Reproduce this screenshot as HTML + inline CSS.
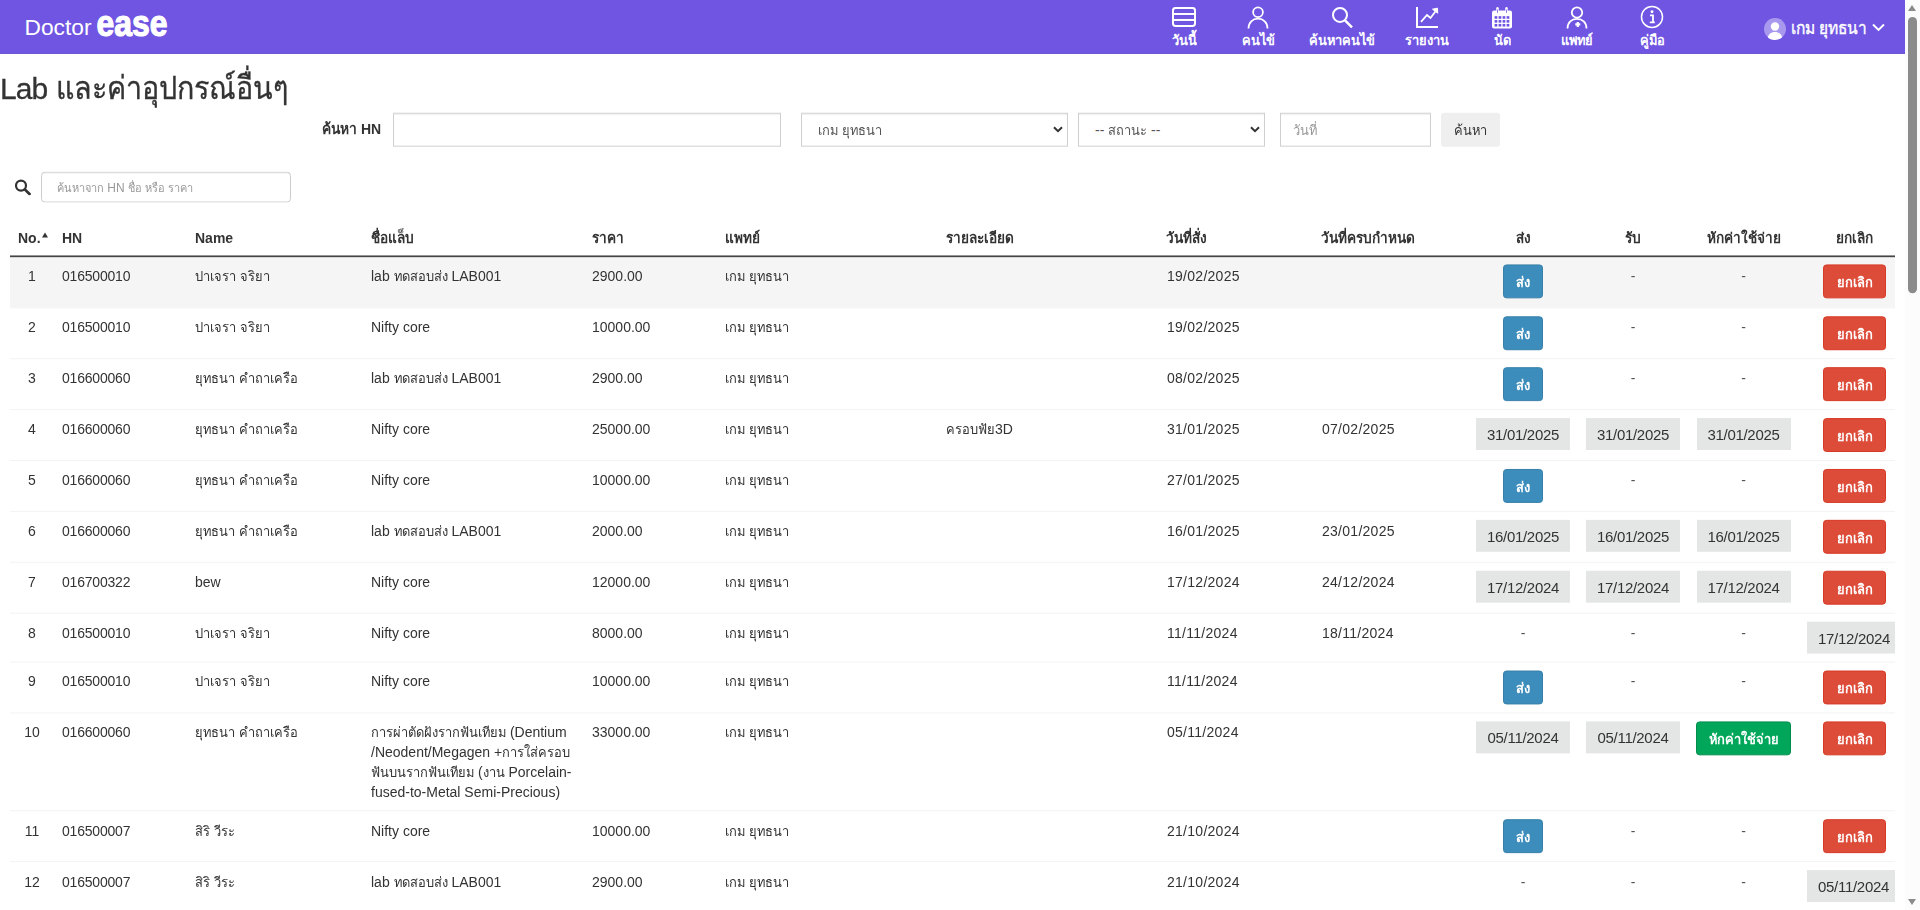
<!DOCTYPE html>
<html lang="th">
<head>
<meta charset="utf-8">
<title>Lab</title>
<style>
*{box-sizing:border-box;}
html,body{margin:0;padding:0;}
body{width:1920px;height:910px;overflow:hidden;position:relative;background:#fff;color:#333;
  font-family:"Liberation Sans",sans-serif;font-size:14px;line-height:20px;}
.t{display:inline-block;font-size:12.9px;line-height:0;transform:scaleY(1.08);transform-origin:0 .34em;white-space:nowrap;}
#nav{position:absolute;left:0;top:0;width:1905px;height:54.4px;background:#6f55e1;color:#fff;box-shadow:inset 0 -1px 0 rgba(40,30,120,.18);}
#logo{position:absolute;left:24px;top:0;}
#logo .d{position:absolute;left:0;top:15px;font-size:23px;line-height:26px;letter-spacing:-0.9px;font-weight:normal;}
#logo .e{position:absolute;left:72px;top:9px;font-size:31px;line-height:30px;font-weight:bold;letter-spacing:-1.2px;-webkit-text-stroke:1.3px #fff;}
.ni{position:absolute;top:0;height:54px;width:90px;text-align:center;color:#fff;}
.ni svg{position:absolute;left:50%;top:5px;margin-left:-14px;width:28px;height:24px;}
.ni span.l{position:absolute;left:0;right:0;top:31px;font-size:14px;line-height:18px;font-weight:bold;white-space:nowrap;}
#user{position:absolute;left:1764px;top:0;height:54px;white-space:nowrap;}
#user .av{position:absolute;left:0;top:18px;width:22px;height:22px;border-radius:50%;background:#a898ee;overflow:hidden;}
#user .nm{position:absolute;left:27px;top:17px;font-size:17px;line-height:24px;color:#fff;-webkit-text-stroke:.35px #fff;}
#user .nm .t{font-size:15.5px;}
#user svg.ch{position:absolute;left:108px;top:23px;width:13px;height:9px;}
#sb{position:absolute;left:1905px;top:0;width:15px;height:912px;background:#fcfcfc;}
#sb .th{position:absolute;left:3px;top:17px;width:9px;height:277px;border-radius:5px;background:#8b8b8b;}
#sb .up{position:absolute;left:3px;top:5px;width:0;height:0;border-left:4.5px solid transparent;border-right:4.5px solid transparent;border-bottom:6px solid #8b8b8b;}
#sb .dn{position:absolute;left:3px;top:901px;width:0;height:0;border-left:4.5px solid transparent;border-right:4.5px solid transparent;border-top:6px solid #8b8b8b;}
h1{position:absolute;left:0;top:67px;margin:0;letter-spacing:-.9px;-webkit-text-stroke:.3px #333;font-size:30px;line-height:44px;font-weight:normal;color:#333;white-space:nowrap;}
h1 .t{font-size:28.7px;margin-left:1px;letter-spacing:0;transform:scaleY(1.13);}
.lbl{position:absolute;left:322px;top:119px;font-weight:bold;line-height:20px;white-space:nowrap;}
.inp{position:absolute;height:34px;border:1px solid #d0d0d0;background:#fff;color:#555;padding:6px 16px;line-height:20px;white-space:nowrap;box-shadow:inset 0 1px 1px rgba(0,0,0,.075);}
.inp .car{position:absolute;right:4px;top:12px;width:10px;height:8px;}
.ph{color:#999;}
.lbl .t{font-size:13.8px;}
#btnS{position:absolute;left:1441px;top:112.6px;width:59px;height:34px;background:#efefef;color:#333;text-align:center;line-height:34px;border-radius:3px;}
#mag{position:absolute;left:14px;top:179px;width:17px;height:17px;}
#q{position:absolute;left:41px;top:172px;width:250px;height:31px;border:1px solid #ccc;border-radius:4px;padding:5px 15px;font-size:12px;line-height:20px;color:#999;white-space:nowrap;box-shadow:inset 0 1px 1px rgba(0,0,0,.075);}
#q .t{font-size:11px;}
#tw{position:absolute;left:10px;top:220px;width:1885px;height:691px;overflow:hidden;}
#pg{position:absolute;left:0;top:0;width:1920px;height:912px;overflow:hidden;transform:scaleY(0.997807);transform-origin:0 0;}
table{width:1900px;border-collapse:separate;border-spacing:0;table-layout:fixed;}
th{font-weight:bold;text-align:left;padding:8px 8px 7px 8px;height:38px;border-bottom:2px solid #444;white-space:nowrap;vertical-align:bottom;line-height:20px;}
td{padding:8px;white-space:nowrap;vertical-align:top;border-top:1px solid #f3f3f3;line-height:20px;}
tr.first td{border-top:none;background:#f5f5f5;padding-top:7px;}
.c{text-align:center;}
th.c{text-align:center;}
.so{display:inline-block;width:0;height:0;border-left:3.7px solid transparent;border-right:3.7px solid transparent;border-bottom:5px solid #333;margin-left:1px;position:relative;top:-6px;margin-right:-9px;}
.btn{display:inline-block;height:34px;line-height:35.4px;padding:0;border-radius:3.5px;border:1px solid transparent;color:#fff;font-weight:bold;white-space:nowrap;vertical-align:top;text-align:center;}
.btn .t{transform-origin:50% .34em;}
th .t{font-size:13.6px;}
td.x{padding-top:9.6px;}
tr.first td.x{padding-top:8.6px;}
td.dt{letter-spacing:.27px;padding-left:9px;}
td.hn{letter-spacing:-.2px;}
.b-send{background:#3c8dbc;border-color:#367fa9;width:40px;}
.b-can{background:#dd4b39;border-color:#d73925;width:63px;}
.b-ok{background:#00a65a;border-color:#008d4c;width:95px;}
.dl{display:inline-block;height:32px;line-height:33.4px;padding:0;width:94px;background:#e4e6e6;color:#333;font-size:15px;letter-spacing:-.29px;white-space:nowrap;vertical-align:top;text-align:center;}
.dl2{text-align:left;padding-left:11px;}
.ds{color:#555;}
.nw{white-space:nowrap;}
</style>
</head>
<body>
<div id="pg">
<div id="nav">
  <svg id="logo" width="180" height="54" viewBox="0 0 180 54"><text x="0.5" y="35.200" font-family="Liberation Sans, sans-serif" font-size="22.500" fill="#fff" textLength="67" lengthAdjust="spacingAndGlyphs">Doctor</text><text x="72.500" y="36" font-family="Liberation Sans, sans-serif" font-weight="bold" font-size="37.500" fill="#fff" stroke="#fff" stroke-width="1.200" stroke-linejoin="round" textLength="71" lengthAdjust="spacingAndGlyphs">ease</text></svg>
  <div class="ni" style="left:1139px"><svg viewBox="0 0 28 24" fill="none" stroke="#fff" stroke-width="2"><rect x="3" y="3" width="22" height="18" rx="2.5"/><line x1="3" y1="9" x2="25" y2="9"/><line x1="3" y1="15" x2="25" y2="15"/></svg><span class="l"><span class="t">วันนี้</span></span></div>
  <div class="ni" style="left:1213px"><svg viewBox="0 0 28 24" fill="none" stroke="#fff" stroke-width="1.8"><circle cx="14" cy="7.300" r="4.900"/><path d="M4.500 23.500c0-6 4.200-9.800 9.500-9.800s9.500 3.800 9.500 9.800"/></svg><span class="l"><span class="t">คนไข้</span></span></div>
  <div class="ni" style="left:1297px"><svg viewBox="0 0 28 24" fill="none" stroke="#fff" stroke-width="2"><circle cx="12" cy="10" r="7"/><line x1="17" y1="15.500" x2="24" y2="22.500" stroke-width="2.4"/></svg><span class="l"><span class="t">ค้นหาคนไข้</span></span></div>
  <div class="ni" style="left:1382px"><svg viewBox="0 0 28 24" fill="none" stroke="#fff" stroke-width="2"><path d="M4 2v20h21"/><path d="M8 17l6-7 3.500 3 6-8" stroke-width="1.8"/><path d="M19.500 4.200l5-1 .2 5z" fill="#fff" stroke-width="1"/></svg><span class="l"><span class="t">รายงาน</span></span></div>
  <div class="ni" style="left:1457px"><svg viewBox="0 0 28 24"><rect x="4" y="5.500" width="20" height="18" rx="2" fill="#fff"/><g fill="#6f55e1"><rect x="6.6" y="11.2" width="2.7" height="2.600"/><rect x="10.6" y="11.2" width="2.7" height="2.600"/><rect x="14.6" y="11.2" width="2.7" height="2.600"/><rect x="18.6" y="11.2" width="2.7" height="2.600"/><rect x="6.6" y="15.1" width="2.7" height="2.600"/><rect x="10.6" y="15.1" width="2.7" height="2.600"/><rect x="14.6" y="15.1" width="2.7" height="2.600"/><rect x="18.6" y="15.1" width="2.7" height="2.600"/><rect x="6.6" y="19.0" width="2.7" height="2.600"/><rect x="10.6" y="19.0" width="2.7" height="2.600"/><rect x="14.6" y="19.0" width="2.7" height="2.600"/><rect x="18.6" y="19.0" width="2.7" height="2.600"/></g><g stroke="#fff" stroke-width="2.400" stroke-linecap="round"><line x1="9.500" y1="3.200" x2="9.500" y2="7"/><line x1="18.500" y1="3.200" x2="18.500" y2="7"/></g><g stroke="#6f55e1" stroke-width="0.800" stroke-linecap="round"><line x1="9.500" y1="5" x2="9.500" y2="7.500"/><line x1="18.500" y1="5" x2="18.500" y2="7.500"/></g></svg><span class="l"><span class="t">นัด</span></span></div>
  <div class="ni" style="left:1532px"><svg viewBox="0 0 28 24" fill="none" stroke="#fff" stroke-width="1.8"><circle cx="14" cy="7.500" r="5.200"/><path d="M4.500 23.500c0-6 4.200-9.600 9.500-9.600s9.500 3.600 9.500 9.600"/><path d="M14.800 17v5M12.300 19.500h5" stroke-width="2.200"/></svg><span class="l"><span class="t">แพทย์</span></span></div>
  <div class="ni" style="left:1607px"><svg viewBox="0 0 28 24" fill="none" stroke="#fff" stroke-width="1.500"><circle cx="14" cy="12" r="10.500"/><circle cx="14" cy="6.800" r="1.500" fill="#fff" stroke="none"/><path d="M12 10.500h3v7M11.800 17.500h5" stroke-width="1.800"/></svg><span class="l"><span class="t">คู่มือ</span></span></div>
  <div id="user"><div class="av"><svg viewBox="0 0 22 22" width="22" height="22"><circle cx="11" cy="8.500" r="4.200" fill="#fff"/><path d="M3.500 22c0-5.500 3.300-8 7.500-8s7.500 2.500 7.500 8z" fill="#fff"/></svg></div><span class="nm"><span class="t">เกม ยุทธนา</span></span><svg class="ch" viewBox="0 0 13 9" fill="none" stroke="#fff" stroke-width="2"><path d="M1 1.500l5.500 5.500 5.500-5.500"/></svg></div>
</div>
<div id="sb"><div class="up"></div><div class="th"></div><div class="dn"></div></div>
<h1>Lab <span class="t">และค่าอุปกรณ์อื่นๆ</span></h1>

<div class="lbl"><span class="t">ค้นหา</span> HN</div>
<div class="inp" style="left:393px;top:112.6px;width:388px"></div>
<div class="inp" style="left:801px;top:112.6px;width:267px"><span class="t">เกม ยุทธนา</span><svg class="car" viewBox="0 0 10 8" fill="none" stroke="#333" stroke-width="2"><path d="M1 1.500l4 4 4-4"/></svg></div>
<div class="inp" style="left:1078px;top:112.6px;width:187px">-- <span class="t">สถานะ</span> --<svg class="car" viewBox="0 0 10 8" fill="none" stroke="#333" stroke-width="2"><path d="M1 1.500l4 4 4-4"/></svg></div>
<div class="inp" style="left:1280px;top:112.6px;width:151px;padding-left:12px"><span class="ph"><span class="t">วันที่</span></span></div>
<div id="btnS"><span class="t">ค้นหา</span></div>
<svg id="mag" viewBox="0 0 17 17" fill="none" stroke="#333" stroke-width="2.200"><circle cx="7" cy="7" r="5"/><line x1="10.800" y1="10.800" x2="15.500" y2="15.500" stroke-width="2.800" stroke-linecap="round"/></svg>
<div id="q"><span class="t">ค้นหาจาก</span> HN <span class="t">ชื่อ หรือ ราคา</span></div>
<div id="tw"><table><colgroup><col style="width:44px"><col style="width:133px"><col style="width:176px"><col style="width:221px"><col style="width:133px"><col style="width:221px"><col style="width:220px"><col style="width:155px"><col style="width:155px"><col style="width:110px"><col style="width:110px"><col style="width:111px"><col style="width:111px"></colgroup><thead><tr><th>No.<span class="so"></span></th><th>HN</th><th>Name</th><th><span class="t">ชื่อแล็บ</span></th><th><span class="t">ราคา</span></th><th><span class="t">แพทย์</span></th><th><span class="t">รายละเอียด</span></th><th><span class="t">วันที่สั่ง</span></th><th><span class="t">วันที่ครบกำหนด</span></th><th class=c><span class="t">ส่ง</span></th><th class=c><span class="t">รับ</span></th><th class=c><span class="t">หักค่าใช้จ่าย</span></th><th class=c><span class="t">ยกเลิก</span></th></tr></thead><tbody>
<tr class="first" style="height:49.5px"><td class="c x">1</td><td class="x hn">016500010</td><td class="x"><span class="t">ปาเจรา จริยา</span></td><td class="x">lab <span class="t">ทดสอบส่ง</span> LAB001</td><td class="x">2900.00</td><td class="x"><span class="t">เกม ยุทธนา</span></td><td class="x"></td><td class="x dt">19/02/2025</td><td class="x dt"></td><td class="c"><span class="btn b-send"><span class="t">ส่ง</span></span></td><td class="c x"><span class="ds">-</span></td><td class="c x"><span class="ds">-</span></td><td class="c"><span class="btn b-can"><span class="t">ยกเลิก</span></span></td></tr>
<tr style="height:51px"><td class="c x">2</td><td class="x hn">016500010</td><td class="x"><span class="t">ปาเจรา จริยา</span></td><td class="x">Nifty core</td><td class="x">10000.00</td><td class="x"><span class="t">เกม ยุทธนา</span></td><td class="x"></td><td class="x dt">19/02/2025</td><td class="x dt"></td><td class="c"><span class="btn b-send"><span class="t">ส่ง</span></span></td><td class="c x"><span class="ds">-</span></td><td class="c x"><span class="ds">-</span></td><td class="c"><span class="btn b-can"><span class="t">ยกเลิก</span></span></td></tr>
<tr style="height:51px"><td class="c x">3</td><td class="x hn">016600060</td><td class="x"><span class="t">ยุทธนา คำถาเครือ</span></td><td class="x">lab <span class="t">ทดสอบส่ง</span> LAB001</td><td class="x">2900.00</td><td class="x"><span class="t">เกม ยุทธนา</span></td><td class="x"></td><td class="x dt">08/02/2025</td><td class="x dt"></td><td class="c"><span class="btn b-send"><span class="t">ส่ง</span></span></td><td class="c x"><span class="ds">-</span></td><td class="c x"><span class="ds">-</span></td><td class="c"><span class="btn b-can"><span class="t">ยกเลิก</span></span></td></tr>
<tr style="height:51px"><td class="c x">4</td><td class="x hn">016600060</td><td class="x"><span class="t">ยุทธนา คำถาเครือ</span></td><td class="x">Nifty core</td><td class="x">25000.00</td><td class="x"><span class="t">เกม ยุทธนา</span></td><td class="x"><span class="t">ครอบฟัย</span>3D</td><td class="x dt">31/01/2025</td><td class="x dt">07/02/2025</td><td class="c"><span class="dl ">31/01/2025</span></td><td class="c"><span class="dl ">31/01/2025</span></td><td class="c"><span class="dl ">31/01/2025</span></td><td class="c"><span class="btn b-can"><span class="t">ยกเลิก</span></span></td></tr>
<tr style="height:51px"><td class="c x">5</td><td class="x hn">016600060</td><td class="x"><span class="t">ยุทธนา คำถาเครือ</span></td><td class="x">Nifty core</td><td class="x">10000.00</td><td class="x"><span class="t">เกม ยุทธนา</span></td><td class="x"></td><td class="x dt">27/01/2025</td><td class="x dt"></td><td class="c"><span class="btn b-send"><span class="t">ส่ง</span></span></td><td class="c x"><span class="ds">-</span></td><td class="c x"><span class="ds">-</span></td><td class="c"><span class="btn b-can"><span class="t">ยกเลิก</span></span></td></tr>
<tr style="height:51px"><td class="c x">6</td><td class="x hn">016600060</td><td class="x"><span class="t">ยุทธนา คำถาเครือ</span></td><td class="x">lab <span class="t">ทดสอบส่ง</span> LAB001</td><td class="x">2000.00</td><td class="x"><span class="t">เกม ยุทธนา</span></td><td class="x"></td><td class="x dt">16/01/2025</td><td class="x dt">23/01/2025</td><td class="c"><span class="dl ">16/01/2025</span></td><td class="c"><span class="dl ">16/01/2025</span></td><td class="c"><span class="dl ">16/01/2025</span></td><td class="c"><span class="btn b-can"><span class="t">ยกเลิก</span></span></td></tr>
<tr style="height:51px"><td class="c x">7</td><td class="x hn">016700322</td><td class="x">bew</td><td class="x">Nifty core</td><td class="x">12000.00</td><td class="x"><span class="t">เกม ยุทธนา</span></td><td class="x"></td><td class="x dt">17/12/2024</td><td class="x dt">24/12/2024</td><td class="c"><span class="dl ">17/12/2024</span></td><td class="c"><span class="dl ">17/12/2024</span></td><td class="c"><span class="dl ">17/12/2024</span></td><td class="c"><span class="btn b-can"><span class="t">ยกเลิก</span></span></td></tr>
<tr style="height:49px"><td class="c x">8</td><td class="x hn">016500010</td><td class="x"><span class="t">ปาเจรา จริยา</span></td><td class="x">Nifty core</td><td class="x">8000.00</td><td class="x"><span class="t">เกม ยุทธนา</span></td><td class="x"></td><td class="x dt">11/11/2024</td><td class="x dt">18/11/2024</td><td class="c x"><span class="ds">-</span></td><td class="c x"><span class="ds">-</span></td><td class="c x"><span class="ds">-</span></td><td class=""><span class="dl dl2">17/12/2024</span></td></tr>
<tr style="height:51px"><td class="c x">9</td><td class="x hn">016500010</td><td class="x"><span class="t">ปาเจรา จริยา</span></td><td class="x">Nifty core</td><td class="x">10000.00</td><td class="x"><span class="t">เกม ยุทธนา</span></td><td class="x"></td><td class="x dt">11/11/2024</td><td class="x dt"></td><td class="c"><span class="btn b-send"><span class="t">ส่ง</span></span></td><td class="c x"><span class="ds">-</span></td><td class="c x"><span class="ds">-</span></td><td class="c"><span class="btn b-can"><span class="t">ยกเลิก</span></span></td></tr>
<tr style="height:97px"><td class="c x">10</td><td class="x hn">016600060</td><td class="x"><span class="t">ยุทธนา คำถาเครือ</span></td><td class="x"><span class="nw"><span class="t">การผ่าตัดฝังรากฟันเทียม</span> (Dentium<br>/Neodent/Megagen +<span class="t">การใส่ครอบ</span><br><span class="t">ฟันบนรากฟันเทียม</span> (<span class="t">งาน</span> Porcelain-<br>fused-to-Metal Semi-Precious)</span></td><td class="x">33000.00</td><td class="x"><span class="t">เกม ยุทธนา</span></td><td class="x"></td><td class="x dt">05/11/2024</td><td class="x dt"></td><td class="c"><span class="dl ">05/11/2024</span></td><td class="c"><span class="dl ">05/11/2024</span></td><td class="c"><span class="btn b-ok"><span class="t">หักค่าใช้จ่าย</span></span></td><td class="c"><span class="btn b-can"><span class="t">ยกเลิก</span></span></td></tr>
<tr style="height:51px"><td class="c x">11</td><td class="x hn">016500007</td><td class="x"><span class="t">สิริ วีระ</span></td><td class="x">Nifty core</td><td class="x">10000.00</td><td class="x"><span class="t">เกม ยุทธนา</span></td><td class="x"></td><td class="x dt">21/10/2024</td><td class="x dt"></td><td class="c"><span class="btn b-send"><span class="t">ส่ง</span></span></td><td class="c x"><span class="ds">-</span></td><td class="c x"><span class="ds">-</span></td><td class="c"><span class="btn b-can"><span class="t">ยกเลิก</span></span></td></tr>
<tr style="height:49px"><td class="c x">12</td><td class="x hn">016500007</td><td class="x"><span class="t">สิริ วีระ</span></td><td class="x">lab <span class="t">ทดสอบส่ง</span> LAB001</td><td class="x">2900.00</td><td class="x"><span class="t">เกม ยุทธนา</span></td><td class="x"></td><td class="x dt">21/10/2024</td><td class="x dt"></td><td class="c x"><span class="ds">-</span></td><td class="c x"><span class="ds">-</span></td><td class="c x"><span class="ds">-</span></td><td class=""><span class="dl dl2">05/11/2024</span></td></tr>
</tbody></table></div>
</div>
</body>
</html>
